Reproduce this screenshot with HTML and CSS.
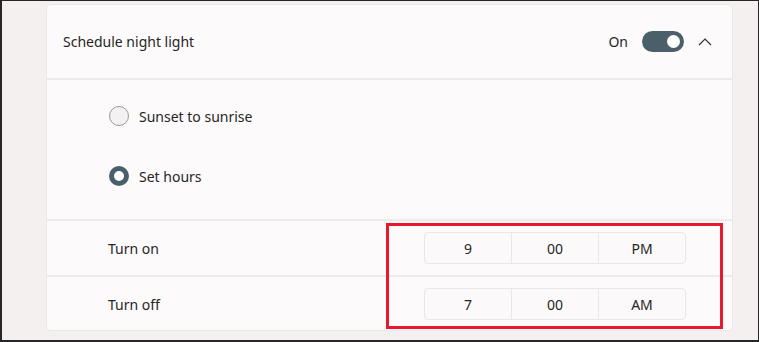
FILE: index.html
```html
<!DOCTYPE html>
<html lang="en">
<head>
    <meta charset="UTF-8">
    <meta name="viewport" content="width=device-width, initial-scale=1.0">
    <title>Night light</title>
    <link rel="stylesheet" href="styles.css">
</head>
<body>
    <div class="frame">
        <section class="card">
            <div class="card-header">
                <span class="title">Schedule night light</span>
                <div class="header-controls">
                    <span class="state">On</span>
                    <span class="toggle"><span class="thumb"></span></span>
                    <svg class="chevron" width="14" height="8" viewBox="0 0 14 8">
                        <polyline points="1,7 7,1 13,7" fill="none" stroke="#333" stroke-width="1.2"/>
                    </svg>
                </div>
            </div>

            <div class="options">
                <label class="option">
                    <span class="radio"></span>
                    <span>Sunset to sunrise</span>
                </label>
                <label class="option">
                    <span class="radio checked"></span>
                    <span>Set hours</span>
                </label>
            </div>

            <div class="time-row">
                <span class="time-label">Turn on</span>
                <div class="picker">
                    <span class="segment">9</span>
                    <span class="segment">00</span>
                    <span class="segment">PM</span>
                </div>
            </div>
            <div class="time-row last">
                <span class="time-label">Turn off</span>
                <div class="picker">
                    <span class="segment">7</span>
                    <span class="segment">00</span>
                    <span class="segment">AM</span>
                </div>
            </div>
        </section>

        <!-- annotation around the time pickers -->
        <div class="highlight-box"></div>
    </div>
</body>
</html>
```

FILE: styles.css
```css
body {
    margin: 0;
    padding: 1px 1px 2px 2px;
    background-color: #262626;
    font-family: "Noto Sans", "Open Sans", sans-serif;
    font-size: 14px;
    color: #262626;
}

.frame {
    position: relative;
    height: 339px;
    box-sizing: border-box;
    padding: 3px 0 0 44px;
    background-color: #f4f0f0;
    overflow: hidden;
}

.card {
    width: 687px;
    height: 327px;
    background-color: #fcfafa;
    border: 1px solid #ebe8e8;
    border-radius: 5px;
    box-sizing: border-box;
}

.card-header {
    display: flex;
    align-items: center;
    justify-content: space-between;
    height: 73px;
    padding: 0 20px 0 16px;
    border-bottom: 2px solid #eeebeb;
}

.header-controls {
    display: flex;
    align-items: center;
}

.state {
    margin-right: 14px;
}

.toggle {
    display: flex;
    align-items: center;
    justify-content: flex-end;
    width: 42px;
    height: 21px;
    padding: 0 4px;
    box-sizing: border-box;
    border-radius: 11px;
    background-color: #4b5f6b;
}

.thumb {
    width: 13px;
    height: 13px;
    border-radius: 50%;
    background-color: #fff;
}

.chevron {
    margin-left: 14px;
}

.options {
    height: 141px;
    box-sizing: border-box;
    padding: 25px 0 0 62px;
    border-bottom: 2px solid #eeebeb;
}

.option {
    display: flex;
    align-items: center;
    gap: 10px;
    height: 22px;
    margin-bottom: 38px;
}

.radio {
    width: 20px;
    height: 20px;
    box-sizing: border-box;
    border-radius: 50%;
    border: 1px solid #9c9a9a;
    background-color: #f3f1f1;
}

.radio.checked {
    border: 5px solid #4b5f6b;
    background-color: #fff;
}

.time-row {
    display: flex;
    align-items: center;
    justify-content: space-between;
    height: 54px;
    padding: 0 46px 0 61px;
    border-bottom: 2px solid #eeebeb;
}

.time-row.last {
    border-bottom: none;
}

.picker {
    display: flex;
    width: 262px;
    height: 32px;
    border: 1px solid #eae7e7;
    border-radius: 4px;
    box-sizing: border-box;
    background-color: #fbf9f9;
}

.segment {
    flex: 1;
    display: flex;
    align-items: center;
    justify-content: center;
    border-left: 1px solid #eae7e7;
}

.segment:first-child {
    border-left: none;
}

.highlight-box {
    position: absolute;
    left: 384px;
    top: 222px;
    width: 337px;
    height: 106px;
    box-sizing: border-box;
    border: 3px solid #e8192c;
}
```
